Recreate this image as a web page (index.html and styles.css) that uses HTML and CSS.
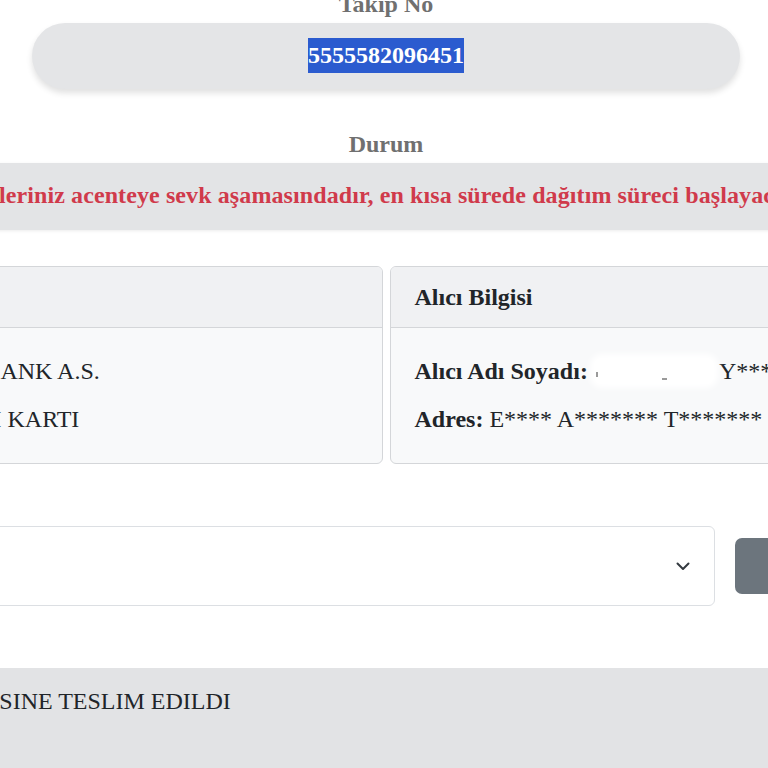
FILE: index.html
```html
<!DOCTYPE html>
<html lang="tr">
<head>
<meta charset="utf-8">
<title>Kargo Takip</title>
<link rel="stylesheet" href="styles.css">
</head>
<body>
<main class="page">
  <h2 class="label">Takip No</h2>
  <div class="tracking-pill"><span class="tracking-no">5555582096451</span></div>

  <h2 class="label label-status">Durum</h2>
  <div class="status-bar">Gönderileriniz acenteye sevk aşamasındadır, en kısa sürede dağıtım süreci başlayacaktır.</div>

  <section class="cards">
    <div class="card">
      <div class="card-header">Gönderici Bilgisi</div>
      <div class="card-body">
        <p><b>Banka:</b> FİNANSBANK A.S.</p>
        <p><b>Kart Tipi:</b> KREDI KARTI</p>
      </div>
    </div>
    <div class="card">
      <div class="card-header">Alıcı Bilgisi</div>
      <div class="card-body">
        <p><b>Alıcı Adı Soyadı:</b> <span class="masked"><i class="speck speck-a"></i><i class="speck speck-b"></i></span> Y*******</p>
        <p><b>Adres:</b> E**** A******* T******* M******</p>
      </div>
    </div>
  </section>

  <section class="select-row">
    <div class="select">
      <span class="select-value">Hareket Geçmişi</span>
      <svg class="chevron" width="14" height="10" viewBox="0 0 14 10"><path d="M1.5 2.5 L7 8 L12.5 2.5" fill="none" stroke="#343a40" stroke-width="2" stroke-linecap="round" stroke-linejoin="round"/></svg>
    </div>
    <button class="btn">Göster</button>
  </section>

  <section class="history">
    <p>ALICININ KENDISINE TESLIM EDILDI</p>
  </section>
</main>
</body>
</html>
```
FILE: styles.css
```css
html, body {
  margin: 0;
  padding: 0;
  background: #ffffff;
  overflow: hidden;
  height: 768px;
}

body {
  font-family: "Liberation Serif", "Times New Roman", serif;
  font-size: 24px;
  line-height: 28px;
  color: #212529;
}

.page {
  width: 1188px;
  margin: -10px 0 0 -208px;
}

.label {
  margin: 0;
  font-size: 24px;
  line-height: 28px;
  font-weight: bold;
  color: #707070;
  text-align: center;
}

.tracking-pill {
  width: 708px;
  height: 66px;
  margin: 5px auto 0;
  background: #e4e5e7;
  border-radius: 33px;
  box-shadow: 0 4px 6px rgba(0, 0, 0, 0.12);
  display: flex;
  align-items: center;
  justify-content: center;
}

.tracking-no {
  font-weight: bold;
  color: #ffffff;
  background: #2b5bcf;
  line-height: 35px;
  margin-top: -1px;
}

.label-status {
  margin-top: 41px;
}

.status-bar {
  margin-top: 5px;
  padding: 18px 30px 21px 0;
  background: #e3e4e6;
  box-shadow: 0 1px 3px rgba(0, 0, 0, 0.08);
  color: #d03a4b;
  font-weight: bold;
  text-align: center;
  white-space: nowrap;
  letter-spacing: 0.1px;
}

.cards {
  display: flex;
  gap: 7px;
  margin-top: 36px;
}

.card {
  flex: 1;
  border: 1px solid #d4d6d9;
  border-radius: 6px;
  background: #f8f9fa;
  overflow: hidden;
}

.card-header {
  padding: 16px 24px;
  background: #f0f1f3;
  border-bottom: 1px solid #d4d6d9;
  font-weight: bold;
}

.card-body {
  padding: 25px 24px 26px;
}

.card-body p {
  margin: 0;
  line-height: 36px;
  white-space: nowrap;
}

.card-body p + p {
  margin-top: 12px;
}

.masked {
  display: inline-block;
  position: relative;
  width: 120px;
  height: 26px;
  vertical-align: -5px;
  background: #ffffff;
  box-shadow: 0 0 6px 4px #ffffff;
  border-radius: 8px;
}

.speck {
  position: absolute;
  background: #9a9a9a;
}

.speck-a {
  left: 2px;
  top: 14px;
  width: 2px;
  height: 5px;
}

.speck-b {
  left: 68px;
  top: 20px;
  width: 5px;
  height: 2px;
}

.select-row {
  display: flex;
  align-items: center;
  gap: 20px;
  margin-top: 62px;
}

.select {
  flex: 1;
  height: 80px;
  box-sizing: border-box;
  border: 1px solid #dcdfe3;
  border-radius: 6px;
  background: #ffffff;
  display: flex;
  align-items: center;
  justify-content: space-between;
  padding: 0 24px 0 24px;
}

.select-value {
  color: #212529;
}

.chevron {
  display: block;
}

.btn {
  width: 245px;
  height: 56px;
  border: 0;
  border-radius: 7px;
  background: #6c757d;
  color: #ffffff;
  font-family: inherit;
  font-size: 24px;
}

.history {
  margin-top: 62px;
  background: #e2e3e5;
  padding: 19px 25px 80px 20px;
}

.history p {
  margin: 0;
  color: #212529;
}
```
